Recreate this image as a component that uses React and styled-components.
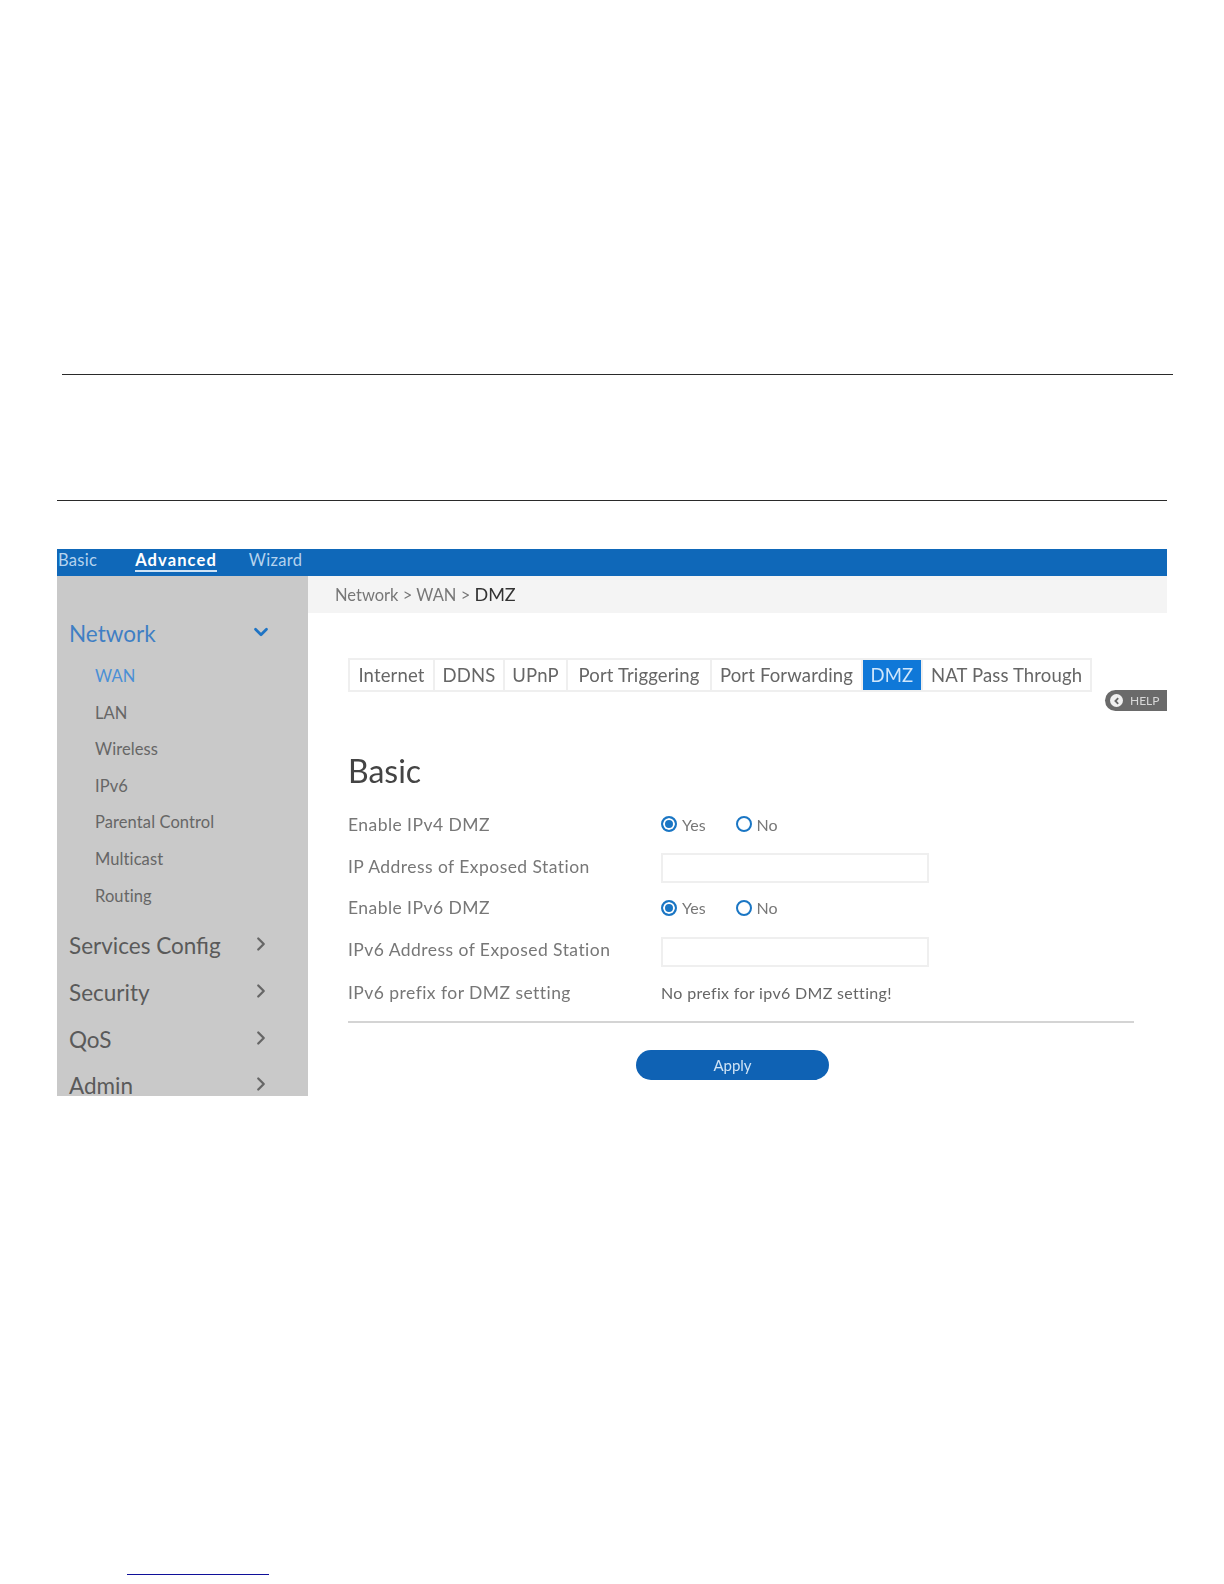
import styled, { createGlobalStyle } from "styled-components";
import { ChevronDown, ChevronRight } from "lucide-react";

const GlobalStyle = createGlobalStyle`
  html, body {
    margin: 0;
    padding: 0;
    background: #fff;
  }
`;

const topLinks = [
  { label: "Basic" },
  { label: "Advanced", active: true },
  { label: "Wizard" },
];

const subItems = ["WAN", "LAN", "Wireless", "IPv6", "Parental Control", "Multicast", "Routing"];
const closedItems = ["Services Config", "Security", "QoS", "Admin"];

const tabs = [
  { label: "Internet", width: 83 },
  { label: "DDNS", width: 70 },
  { label: "UPnP", width: 63 },
  { label: "Port Triggering", width: 144 },
  { label: "Port Forwarding", width: 151 },
  { label: "DMZ", width: 60, active: true },
  { label: "NAT Pass Through", width: 169 },
];

function YesNo() {
  return (
    <Radios>
      <RadioOption>
        <Radio $checked />
        Yes
      </RadioOption>
      <RadioOption>
        <Radio />
        No
      </RadioOption>
    </Radios>
  );
}

export default function App() {
  return (
    <Page>
      <GlobalStyle />
      <RuleOne />
      <RuleTwo />

      <Shot>
        <TopBar>
          {topLinks.map((l) => (
            <TopLink key={l.label} $active={l.active}>
              {l.label}
            </TopLink>
          ))}
        </TopBar>

        <Body>
          <Sidebar>
            <OpenItem>
              Network
              <ChevronDown size={22} strokeWidth={3} />
            </OpenItem>
            <SubList>
              {subItems.map((s, i) => (
                <SubItem key={s} $active={i === 0}>
                  {s}
                </SubItem>
              ))}
            </SubList>
            {closedItems.map((c) => (
              <MainItem key={c}>
                {c}
                <ChevronRight size={22} strokeWidth={2.5} />
              </MainItem>
            ))}
          </Sidebar>

          <Content>
            <Breadcrumb>
              Network &gt; WAN &gt; <b>DMZ</b>
            </Breadcrumb>

            <Inner>
              <Tabs>
                {tabs.map((t) => (
                  <Tab key={t.label} $active={t.active} $width={t.width}>
                    {t.label}
                  </Tab>
                ))}
              </Tabs>

              <Heading>Basic</Heading>

              <Form>
                <Row $height={42}>
                  <Label>Enable IPv4 DMZ</Label>
                  <YesNo />
                </Row>
                <Row $height={42}>
                  <Label>IP Address of Exposed Station</Label>
                  <TextBox />
                </Row>
                <Row $height={41}>
                  <Label>Enable IPv6 DMZ</Label>
                  <YesNo />
                </Row>
                <Row $height={43}>
                  <Label>IPv6 Address of Exposed Station</Label>
                  <TextBox />
                </Row>
                <Row $height={42}>
                  <Label>IPv6 prefix for DMZ setting</Label>
                  <Value>No prefix for ipv6 DMZ setting!</Value>
                </Row>
              </Form>

              <Divider />
              <ApplyButton>Apply</ApplyButton>
            </Inner>

            <Help>
              <HelpDot>
                <svg width="8" height="8" viewBox="0 0 8 8">
                  <path d="M5.2 1.2 2.4 4l2.8 2.8" fill="none" stroke="#666" strokeWidth="1.8" />
                </svg>
              </HelpDot>
              HELP
            </Help>
          </Content>
        </Body>
      </Shot>

      <FootLink />
    </Page>
  );
}

const Page = styled.div`
  position: relative;
  width: 1224px;
  height: 1584px;
  padding-top: 374px;
  box-sizing: border-box;
  overflow: hidden;
  background: #fff;
  font-family: "Lato", "Open Sans", sans-serif;
`;

const RuleOne = styled.div`
  width: 1111px;
  height: 1px;
  margin-left: 62px;
  background: #2a2a2a;
`;

const RuleTwo = styled.div`
  width: 1110px;
  height: 1px;
  margin: 125px 0 0 57px;
  background: #2a2a2a;
`;

const Shot = styled.div`
  width: 1110px;
  height: 547px;
  margin: 48px 0 0 57px;
  display: flex;
  flex-direction: column;
  overflow: hidden;
  filter: blur(0.45px);
`;

const TopBar = styled.div`
  flex: none;
  height: 27px;
  display: flex;
  align-items: flex-start;
  gap: 38px;
  padding: 1px 0 0 1px;
  box-sizing: border-box;
  background: #0f68b9;
`;

const TopLink = styled.span`
  margin-right: ${(p) => (p.$active ? "-6px" : "0")};
  font-size: 16.5px;
  line-height: 20px;
  letter-spacing: ${(p) => (p.$active ? "1.1px" : "0.3px")};
  font-weight: ${(p) => (p.$active ? 700 : 400)};
  color: ${(p) => (p.$active ? "#fff" : "#b5d3ee")};
  border-bottom: ${(p) => (p.$active ? "2px solid #cfe3f5" : "2px solid transparent")};
`;

const Body = styled.div`
  flex: 1;
  display: flex;
  min-height: 0;
`;

const Sidebar = styled.div`
  flex: none;
  width: 251px;
  padding: 34px 0 0 12px;
  box-sizing: border-box;
  background: #c9c9c9;
  overflow: hidden;
`;

const MainItem = styled.div`
  width: 203px;
  height: 46.8px;
  display: flex;
  align-items: center;
  justify-content: space-between;
  font-size: 22.5px;
  color: #5a5a5a;
  svg {
    color: #666;
    margin-top: -3px;
  }
`;

const OpenItem = styled(MainItem)`
  height: 47px;
  color: #3f7fc4;
  svg {
    color: #1f74c4;
    margin-top: -4px;
  }
`;

const SubList = styled.div`
  display: flex;
  flex-direction: column;
  padding: 1px 0 8px 26px;
`;

const SubItem = styled.div`
  height: 36.6px;
  line-height: 36.6px;
  font-size: 16.5px;
  letter-spacing: 0.1px;
  color: ${(p) => (p.$active ? "#4a8fd6" : "#666")};
`;

const Content = styled.div`
  position: relative;
  flex: 1;
  min-width: 0;
`;

const Breadcrumb = styled.div`
  height: 37px;
  line-height: 37px;
  padding-left: 27px;
  background: #f4f4f4;
  font-size: 16.5px;
  color: #777;
  b {
    font-size: 18px;
    font-weight: 400;
    color: #333;
  }
`;

const Inner = styled.div`
  padding: 45px 33px 0 40px;
`;

const Tabs = styled.div`
  display: flex;
  width: fit-content;
  height: 34px;
  box-sizing: border-box;
  border: 2px solid #efefef;
`;

const Tab = styled.div`
  width: ${(p) => p.$width}px;
  box-sizing: border-box;
  display: flex;
  align-items: center;
  justify-content: center;
  font-size: 18.5px;
  letter-spacing: 0.15px;
  white-space: nowrap;
  color: ${(p) => (p.$active ? "#cfe6fb" : "#666")};
  background: ${(p) => (p.$active ? "#0f78d8" : "#fff")};
  & + & {
    border-left: 2px solid #efefef;
  }
`;

const Heading = styled.h2`
  margin: 56px 0 0;
  height: 45px;
  line-height: 45px;
  font-size: 32px;
  font-weight: 400;
  color: #444;
`;

const Form = styled.div`
  margin-top: 10px;
`;

const Row = styled.div`
  height: ${(p) => p.$height}px;
  display: grid;
  grid-template-columns: 313px 1fr;
  align-items: center;
`;

const Label = styled.span`
  font-size: 17.5px;
  letter-spacing: 0.45px;
  color: #777;
`;

const Value = styled.span`
  font-size: 16px;
  letter-spacing: 0.33px;
  color: #666;
`;

const Radios = styled.div`
  display: flex;
  gap: 30px;
`;

const RadioOption = styled.label`
  display: flex;
  align-items: center;
  gap: 5px;
  font-size: 16px;
  color: #777;
`;

const Radio = styled.span`
  width: 16px;
  height: 16px;
  box-sizing: border-box;
  border-radius: 50%;
  border: 2px solid #1a76c4;
  background: ${(p) => (p.$checked ? "#1a76c4" : "#fff")};
  box-shadow: ${(p) => (p.$checked ? "inset 0 0 0 2px #fff" : "none")};
`;

const TextBox = styled.div`
  width: 268px;
  height: 30px;
  margin-top: 4px;
  box-sizing: border-box;
  border: 2px solid #efefef;
  background: #fff;
`;

const Divider = styled.div`
  height: 2px;
  margin-top: 8px;
  background: #d4d4d4;
`;

const ApplyButton = styled.button`
  display: block;
  width: 193px;
  height: 30px;
  margin: 27px 0 0 288px;
  padding: 0;
  border: none;
  border-radius: 15px;
  background: #0f62b4;
  color: #cfe3f5;
  font-family: inherit;
  font-size: 15px;
`;

const Help = styled.div`
  position: absolute;
  top: 114px;
  right: 0;
  width: 62px;
  height: 21px;
  box-sizing: border-box;
  padding-left: 5px;
  display: flex;
  align-items: center;
  gap: 7px;
  border-radius: 11px 0 0 11px;
  background: #6a6a6a;
  color: #d8d8d8;
  font-size: 12px;
`;

const HelpDot = styled.span`
  width: 13px;
  height: 13px;
  border-radius: 50%;
  background: #f0f0f0;
  display: flex;
  align-items: center;
  justify-content: center;
`;

const FootLink = styled.div`
  position: absolute;
  left: 127px;
  top: 1574px;
  width: 142px;
  height: 1px;
  background: #10109a;
`;
